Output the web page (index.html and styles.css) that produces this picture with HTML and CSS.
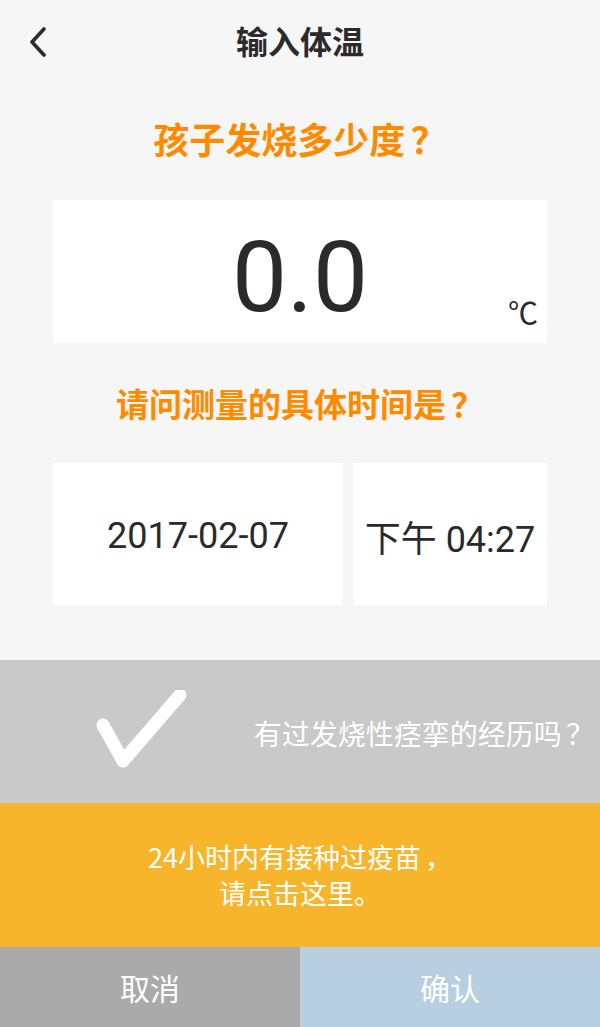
FILE: index.html
```html
<!DOCTYPE html>
<html lang="zh-CN">
<head>
  <meta charset="UTF-8"/>
  <meta name="viewport" content="width=device-width, initial-scale=1.0"/>
  <title>输入体温</title>
  <link rel="stylesheet" href="styles.css">
</head>
<body>
  <div class="page">
    <header class="topbar">
      <a class="back" href="#">
        <svg width="20" height="30" viewBox="0 0 20 30"><path d="M16 2 L4 15 L16 28" fill="none" stroke="#2b2b2b" stroke-width="3.6" stroke-linecap="round" stroke-linejoin="round"/></svg>
      </a>
      <h1>输入体温</h1>
      <span></span>
    </header>

    <main class="content">
      <h2 class="ask">孩子发烧多少度<span class="punc">？</span></h2>
      <div class="temp-box">
        <span class="temp-value">0.0</span>
        <span class="temp-unit">℃</span>
      </div>

      <h2 class="ask ask-time">请问测量的具体时间是<span class="punc">？</span></h2>
      <div class="time-row">
        <div class="time-cell date">2017-02-07</div>
        <div class="time-cell clock">下午 04:27</div>
      </div>
    </main>

    <!-- 高热惊厥 -->
    <div class="seizure">
      <svg class="check" width="100" height="90" viewBox="0 0 100 90"><path d="M11 35 L31 71 L88 5" fill="none" stroke="#fff" stroke-width="13" stroke-linecap="round" stroke-linejoin="round"/></svg>
      <span class="seizure-text">有过发烧性痉挛的经历吗<span class="punc">？</span></span>
    </div>

    <div class="vaccine">
      <p>24小时内有接种过疫苗<span class="punc">，</span><br>请点击这里。</p>
    </div>

    <div class="actions">
      <button class="cancel">取消</button>
      <button class="ok">确认</button>
    </div>
  </div>
</body>
</html>
```

FILE: styles.css
```css
* { box-sizing: border-box; font-family: Roboto, 'Noto Sans CJK SC', sans-serif; }
html, body { margin: 0; height: 100%; }
body { background: #f6f6f6; color: #2b2b2b; }
.page { display: flex; flex-direction: column; height: 1027px; }
.punc { font-family: 'Noto Sans CJK TC', sans-serif; margin-left: 0.15em; }

.topbar { height: 84px; display: grid; grid-template-columns: 1fr auto 1fr; align-items: center; padding: 0 28px 4px; }
.topbar h1 { margin: 0; font-size: 32px; font-weight: 700; color: #2b2b2b; font-family: 'Noto Sans CJK SC', sans-serif; }
.back { display: flex; align-items: center; width: 20px; height: 30px; margin-top: 4px; }

.content { flex: 1; padding: 0 53px; }
.ask { margin: 32px 0 40px; text-align: center; font-size: 36px; line-height: 44px; font-weight: 700; color: #ff8a00; font-family: 'Noto Sans CJK SC', sans-serif; }
.ask-time { margin: 40px 0 40px; font-size: 33px; line-height: 40px; }

.temp-box { position: relative; height: 143px; background: #fff; display: flex; align-items: center; justify-content: center; }
.temp-value { font-size: 98px; line-height: 1; color: #2a2a2a; padding-top: 12px; }
.temp-unit { position: absolute; right: 9px; bottom: 17px; font-size: 30px; line-height: 1; color: #2a2a2a; font-family: 'Noto Sans CJK SC', sans-serif; }

.time-row { display: flex; gap: 10px; height: 142px; }
.time-cell { background: #fff; display: flex; align-items: center; justify-content: center; font-size: 36px; color: #2a2a2a; padding-top: 4px; }
.date { flex: 290; }
.clock { flex: 194; }

.seizure { height: 143px; background: #c8c9c8; display: flex; align-items: center; padding: 0 6px 0 92px; }
.check { flex-shrink: 0; margin-top: 6px; }
.seizure-text { margin-left: auto; font-size: 28px; color: #fff; font-family: 'Noto Sans CJK SC', sans-serif; padding-top: 2px; }

.vaccine { height: 144px; background: #f7b52c; display: flex; align-items: center; justify-content: center; }
.vaccine p { margin: 0; color: #fff; text-align: center; font-size: 27px; line-height: 36px; font-family: 'Noto Sans CJK SC', sans-serif; }

.actions { height: 80px; display: flex; }
.actions button { flex: 1; border: none; margin: 0; font-size: 30px; color: #fff; font-family: 'Noto Sans CJK SC', sans-serif; cursor: pointer; }
.cancel { background: #aaaaaa; }
.ok { background: #b8cfe1; }
```
